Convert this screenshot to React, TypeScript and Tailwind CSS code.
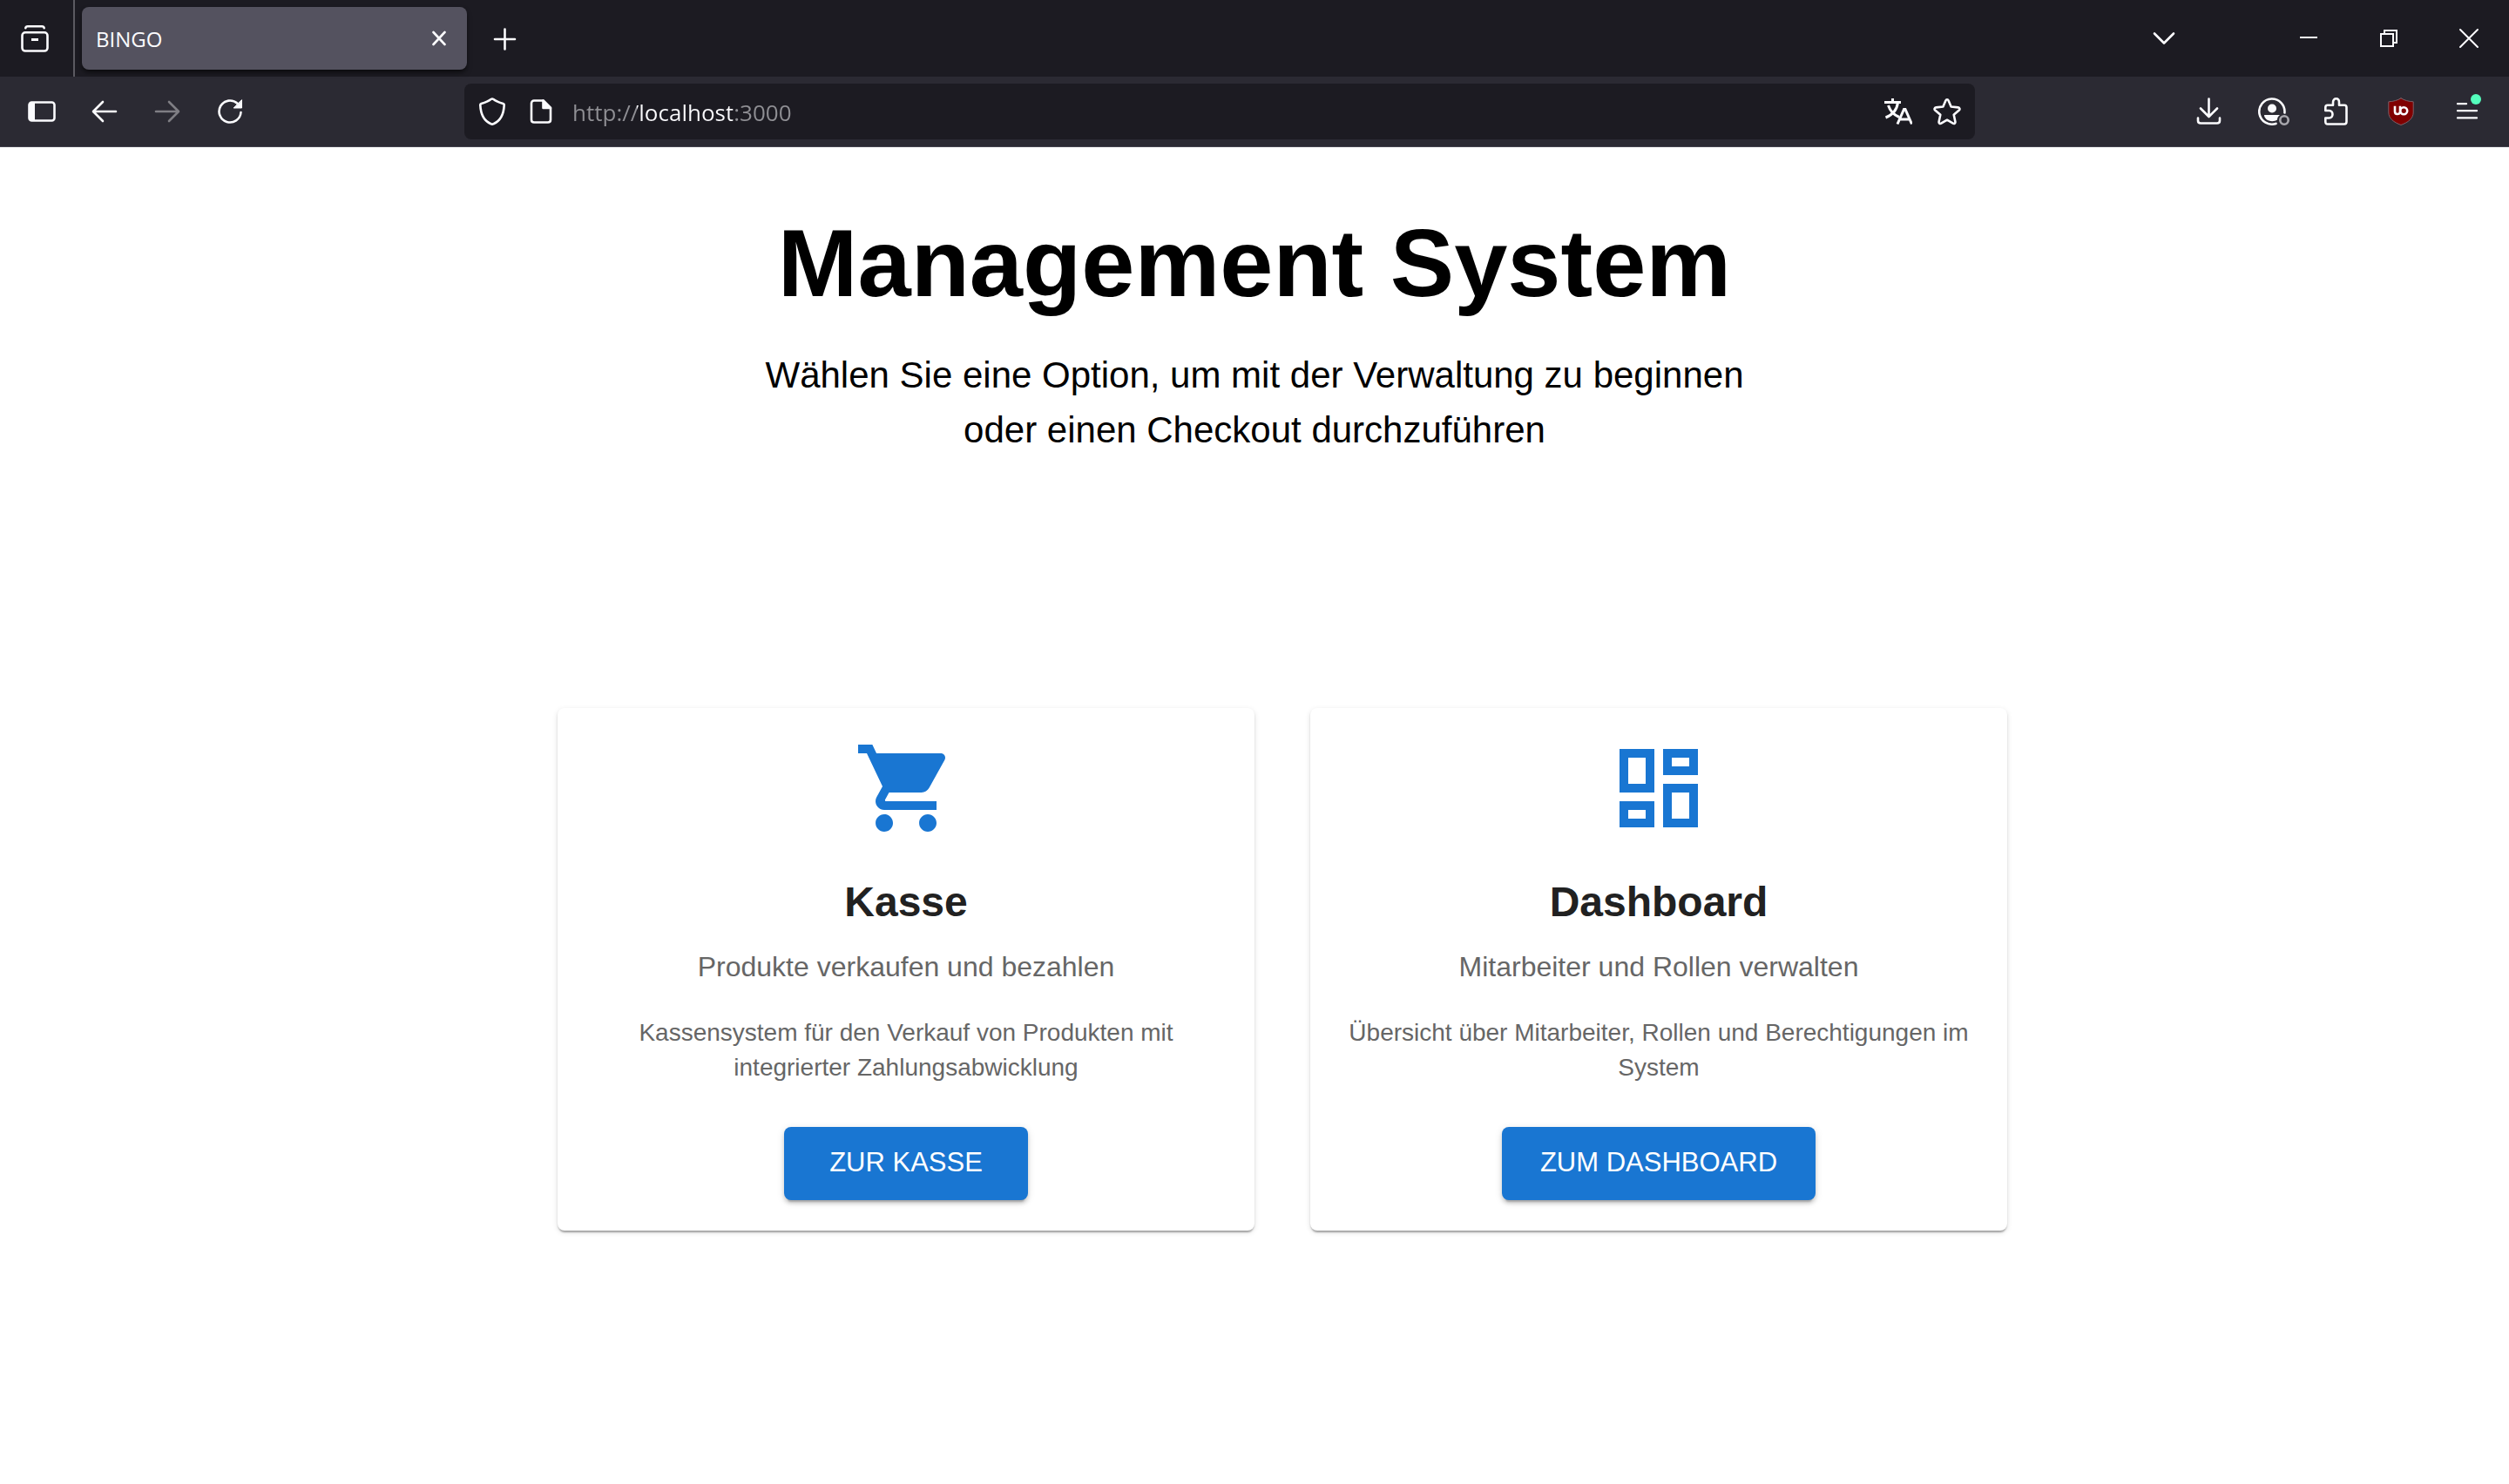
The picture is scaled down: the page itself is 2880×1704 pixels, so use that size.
import type { ReactNode } from "react";

const ui = "font-['Open_Sans','Noto_Sans',sans-serif]";

function Icon({
  width = 32,
  height = 32,
  children,
}: {
  width?: number;
  height?: number;
  children: ReactNode;
}) {
  return (
    <svg
      width={width}
      height={height}
      viewBox={`0 0 ${width} ${height}`}
      fill="none"
      stroke="currentColor"
      strokeWidth="2.6"
      strokeLinecap="round"
      strokeLinejoin="round"
      aria-hidden="true"
    >
      {children}
    </svg>
  );
}

function IconButton({ label, children }: { label: string; children: ReactNode }) {
  return (
    <button type="button" aria-label={label} className="shrink-0">
      {children}
    </button>
  );
}

function WindowButton({ label, children }: { label: string; children: ReactNode }) {
  return (
    <button type="button" aria-label={label} className="flex w-23 items-center justify-center">
      {children}
    </button>
  );
}

function TabStrip() {
  return (
    <div className="flex h-22 bg-[#1c1b22]">
      <button
        type="button"
        aria-label="Firefox View"
        className="flex w-[86px] items-center border-r-2 border-[#5b5a61] pl-6"
      >
        <Icon>
          <path d="M5.300 4.300c.3-1.600 1.200-2 2.500-2h16.400c1.300 0 2.200.4 2.500 2" />
          <rect x="1.500" y="9.300" width="29" height="21.200" rx="3.500" />
          <path d="M12 17.500h8" strokeLinecap="butt" strokeWidth="3" />
        </Icon>
      </button>
      <div className="my-2 ml-2 flex w-[442px] items-center justify-between rounded-lg bg-[#54525f] pr-4 pl-4 shadow-md shadow-black/50">
        <span className="pt-0.5 text-2xl">BINGO</span>
        <IconButton label="Tab schließen">
          <Icon>
            <path d="M9.500 9l13 14M22.500 9l-13 14" />
          </Icon>
        </IconButton>
      </div>
      <button type="button" aria-label="Neuer Tab" className="ml-7">
        <Icon>
          <path d="M15.500 5.500v23M4 17h23" />
        </Icon>
      </button>
      <div className="ml-auto flex">
        <button type="button" aria-label="Alle Tabs auflisten" className="mr-20 flex w-20 items-center justify-center">
          <Icon>
            <path d="M5 10.500l11 11 11-11" />
          </Icon>
        </button>
        <WindowButton label="Minimieren">
          <Icon>
            <path d="M6 15h20" strokeWidth="2" strokeLinecap="butt" />
          </Icon>
        </WindowButton>
        <WindowButton label="Verkleinern">
          <Icon>
            <g strokeWidth="2" strokeLinejoin="miter" strokeLinecap="butt">
              <path d="M7 11h14v14H7z" />
              <path d="M11 11V7h14v14h-4" />
            </g>
          </Icon>
        </WindowButton>
        <WindowButton label="Schließen">
          <Icon>
            <path d="M6 6l20 20M26 6L6 26" strokeWidth="2" />
          </Icon>
        </WindowButton>
      </div>
    </div>
  );
}

function AddressBar() {
  return (
    <div className="mx-[253px] flex h-16 flex-1 items-center rounded-lg bg-[#1c1b22] pr-4 pl-4">
      <IconButton label="Schutz vor Aktivitätenverfolgung">
        <Icon>
          <path d="M16 1.500c.6 0 1 .2 1.500.500C20 4 25 6 28.500 7c.8.300 1.300 1 1.200 1.900C29.200 19 25 27 17.500 30.200c-1 .5-2 .5-3 0C7 27 2.800 19 2.300 8.900 2.200 8 2.700 7.300 3.500 7 7 6 12 4 14.500 2c.500-.3.900-.5 1.500-.5z" />
        </Icon>
      </IconButton>
      <button type="button" aria-label="Seiteninformationen" className="ml-6">
        <Icon>
          <path d="M18.500 3.500H8c-1.700 0-3 1.300-3 3v19c0 1.700 1.300 3 3 3h16c1.700 0 3-1.300 3-3V12z" />
          <path d="M18.500 3.500V12H27z" fill="currentColor" />
        </Icon>
      </button>
      <input
        type="text"
        aria-label="Adresse"
        defaultValue="http://localhost:3000"
        className="ml-5 min-w-0 flex-1 bg-[linear-gradient(90deg,#8f8f94_74px,#fbfbfe_74px,#fbfbfe_184px,#8f8f94_184px)] bg-clip-text pt-0.5 text-[26px] text-transparent outline-none"
      />
      <div className="flex gap-6">
        <IconButton label="Seite übersetzen">
          <Icon>
            <g strokeLinecap="butt" strokeLinejoin="miter" strokeWidth="3">
              <path d="M0 5.500h19M9.500 1v4.500" />
              <path d="M4.500 9c2 6 6.500 11 12.500 13.500M15.500 5.500C14.500 14 9 20 1.500 23" />
              <path d="M15 30.500l7.500-17h1.500l7.500 17M18 25h10.500" />
            </g>
          </Icon>
        </IconButton>
        <IconButton label="Lesezeichen hinzufügen">
          <Icon>
            <path d="M14.500 3.300c.6-1.500 2.400-1.500 3 0l3.100 7.200 8.200.9c1.600.2 2.200 2 1 3.100l-6.100 5.300 1.700 8c.3 1.600-1.200 2.700-2.600 1.900L16 25.700l-6.800 4c-1.400.8-2.900-.3-2.600-1.900l1.700-8-6.100-5.300c-1.200-1.100-.6-2.900 1-3.100l8.200-.9z" />
          </Icon>
        </IconButton>
      </div>
    </div>
  );
}

function Toolbar() {
  return (
    <div className="flex h-[81px] items-center border-b border-[#45434f] bg-[#2b2a33] px-8">
      <div className="flex gap-10">
        <IconButton label="Seitenleiste">
          <Icon>
            <rect x="1.500" y="5.500" width="29" height="21" rx="3" />
            <path d="M2 5h6v22H2z" fill="currentColor" stroke="none" />
          </Icon>
        </IconButton>
        <IconButton label="Zurück">
          <Icon>
            <path d="M29 16H3.500M14 5L3 16l11 11" />
          </Icon>
        </IconButton>
        <button type="button" aria-label="Vor" disabled className="text-[#7f7e84]">
          <Icon>
            <path d="M3 16h25.500M18 5l11 11-11 11" />
          </Icon>
        </button>
        <IconButton label="Neu laden">
          <Icon>
            <path d="M28.500 17A12.500 12.500 0 1 1 24.500 6.800" />
            <path d="M29.500 3v9h-9z" fill="currentColor" strokeWidth="1" />
          </Icon>
        </IconButton>
      </div>
      <AddressBar />
      <div className="flex gap-10">
        <IconButton label="Downloads">
          <Icon>
            <path d="M15.500 1.500v20M6 12.500l9.500 9.500 9.500-9.500" />
            <path d="M3 23.500v3c0 1.700 1.300 3 3 3h19c1.700 0 3-1.300 3-3v-3" />
          </Icon>
        </IconButton>
        <IconButton label="Konto">
          <Icon width={36}>
            <path d="M20.500 29.900A14.600 14.600 0 1 1 30.400 17.500" />
            <circle cx="16" cy="12.500" r="5" fill="currentColor" stroke="none" />
            <path d="M7 20h18c-2 1.500-3 3-3 5.500-3.500 2.500-9.500 2-12.500-.5C8 23.500 7 22 7 20z" fill="currentColor" stroke="none" />
            <circle cx="30" cy="26" r="4.700" stroke="#a9a8ae" />
          </Icon>
        </IconButton>
        <IconButton label="Erweiterungen">
          <Icon width={28}>
            <path d="M1.300 12v-.7c0-1.500 1-2.500 2.500-2.500H10V5.500c0-5.600 7-5.600 7 0v3.300h6c1.600 0 2.500 1 2.500 2.500v16.500c0 1.700-.9 2.700-2.500 2.700H3.800c-1.600 0-2.500-1-2.500-2.700v-4.300h4.200c5.300 0 5.300-8.500 0-8.500H1.300z" />
          </Icon>
        </IconButton>
        <IconButton label="uBlock Origin">
          <Icon width={40}>
            <path d="M20 .8c4 2.500 9 3.800 14.200 4V17c0 7-6 11.500-14.200 14.500C11.800 28.500 5.800 24 5.800 17V4.800C11 4.600 16 3.300 20 .8z" fill="#800000" stroke="#7b6068" strokeWidth="1" />
            <path d="M13 9.800v6.200c0 4 5.200 4 6 .5V9.800" strokeLinecap="butt" />
            <circle cx="23.200" cy="15.200" r="4" />
          </Icon>
        </IconButton>
        <button type="button" aria-label="Menü" className="relative">
          <Icon>
            <path d="M5 7.200h10M5 15.200h22M5 23.400h22" strokeWidth="2.300" />
          </Icon>
          <span className="absolute -top-1 right-0 size-3 rounded-full bg-[#54ffbd]" />
        </button>
      </div>
    </div>
  );
}

function OptionCard({
  icon,
  title,
  subtitle,
  text,
  action,
}: {
  icon: string;
  title: string;
  subtitle: string;
  text: string;
  action: string;
}) {
  return (
    <article className="flex flex-col items-center rounded-lg bg-white px-8 pt-8 pb-[35px] text-center text-[#666666] shadow-[0_4px_2px_-2px_rgba(0,0,0,0.2),0_2px_2px_0_rgba(0,0,0,0.14),0_2px_6px_0_rgba(0,0,0,0.12)]">
      <svg viewBox="0 0 24 24" className="size-30 fill-[#1976d2]" aria-hidden="true">
        <path d={icon} />
      </svg>
      <h2 className="mt-10 text-5xl leading-[61px] font-bold text-[#212121]">{title}</h2>
      <p className="mt-5 text-[32px] leading-12">{subtitle}</p>
      <p className="mt-8 text-[28px] leading-10">{text}</p>
      <button
        type="button"
        className="mt-12 h-21 min-w-[280px] rounded-lg bg-[#1976d2] px-11 pb-0.5 text-[31px] text-white uppercase shadow-[0_6px_2px_-4px_rgba(0,0,0,0.2),0_4px_4px_0_rgba(0,0,0,0.14),0_2px_10px_0_rgba(0,0,0,0.12)]"
      >
        {action}
      </button>
    </article>
  );
}

const cartPath =
  "M7 18c-1.100 0-1.990.9-1.990 2S5.900 22 7 22s2-.9 2-2-.9-2-2-2zM1 2v2h2l3.600 7.590-1.350 2.450c-.16.28-.25.61-.25.96 0 1.100.9 2 2 2h12v-2H7.420c-.14 0-.25-.11-.25-.25l.03-.12.9-1.630h7.450c.75 0 1.410-.41 1.750-1.030l3.580-6.490c.08-.14.12-.31.12-.48 0-.55-.45-1-1-1H5.210l-.94-2H1zm16 16c-1.100 0-1.990.9-1.990 2s.89 2 1.990 2 2-.9 2-2-.9-2-2-2z";
const dashboardPath =
  "M19 5v2h-4V5h4M9 5v6H5V5h4m10 8v6h-4v-6h4M9 17v2H5v-2h4M21 3h-8v6h8V3zM11 3H3v10h8V3zm10 8h-8v10h8V11zm-10 4H3v6h8v-6z";

export default function App() {
  return (
    <div className="min-h-screen bg-white">
      <header className={`${ui} text-[#fbfbfe]`}>
        <TabStrip />
        <Toolbar />
      </header>
      <main className="flex flex-col items-center pt-16 font-['Liberation_Sans',Arial,sans-serif] text-black">
        <h1 className="text-center text-[110px] leading-[138px] font-bold">Management System</h1>
        <p className="mt-7 max-w-[1152px] text-center text-[42px] leading-[63px]">
          Wählen Sie eine Option, um mit der Verwaltung zu beginnen oder einen Checkout durchzuführen
        </p>
        <section className="mt-72 grid w-full max-w-[1728px] grid-cols-2 gap-16 pl-16">
          <OptionCard
            icon={cartPath}
            title="Kasse"
            subtitle="Produkte verkaufen und bezahlen"
            text="Kassensystem für den Verkauf von Produkten mit integrierter Zahlungsabwicklung"
            action="Zur Kasse"
          />
          <OptionCard
            icon={dashboardPath}
            title="Dashboard"
            subtitle="Mitarbeiter und Rollen verwalten"
            text="Übersicht über Mitarbeiter, Rollen und Berechtigungen im System"
            action="Zum Dashboard"
          />
        </section>
      </main>
    </div>
  );
}
